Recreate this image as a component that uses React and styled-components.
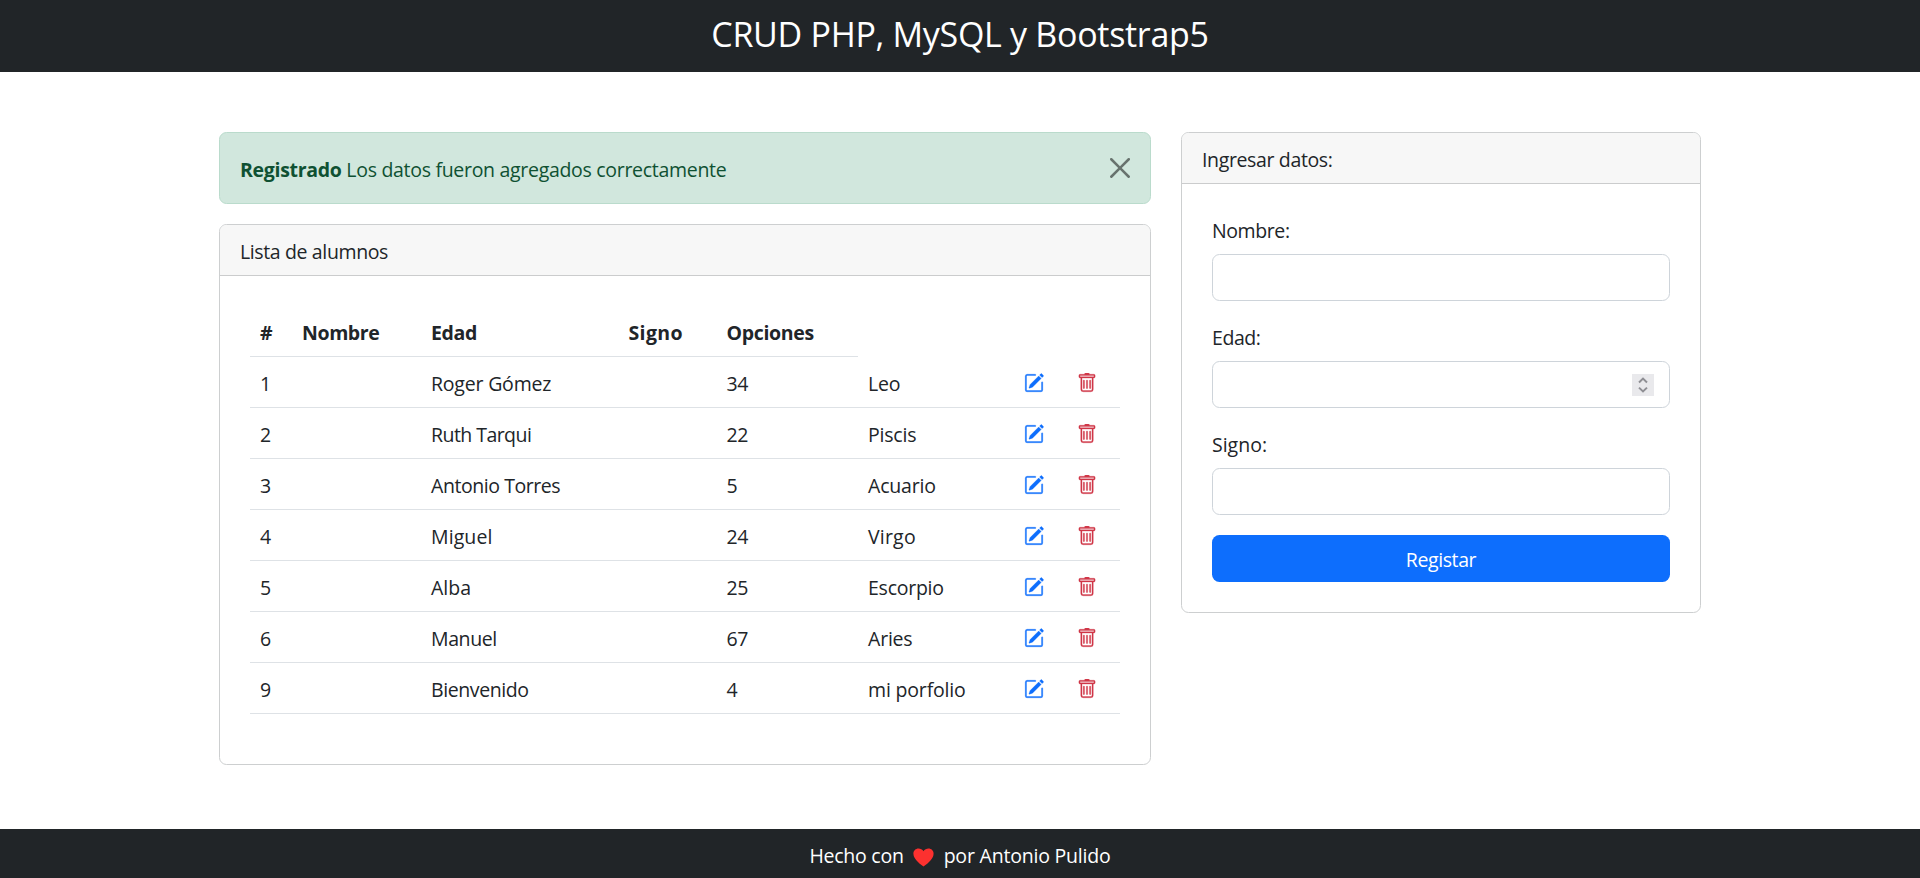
import React from "react";
import styled, { createGlobalStyle } from "styled-components";
import { BsPencilSquare, BsTrash } from "react-icons/bs";

const GlobalStyle = createGlobalStyle`
  *, *::before, *::after { box-sizing: border-box; }
  body {
    margin: 0;
    background: #fff;
    color: #212529;
    font: 400 19.5px/30px "Open Sans", "Noto Sans", sans-serif;
    overflow: hidden;
  }
`;

const Page = styled.div`
  display: flex;
  flex-direction: column;
  height: 878px;
`;

const Header = styled.header`
  flex: none;
  height: 72px;
  padding: 13px 0 17px;
  background: #212528;
  color: #fff;
  text-align: center;
`;

const Title = styled.h3`
  margin: 0;
  font-size: 34px;
  font-weight: 400;
  line-height: 42px;
  letter-spacing: -0.3px;
`;

const Main = styled.main`
  flex: 1;
  display: grid;
  grid-template-columns: 932px 520px;
  justify-content: center;
  align-items: start;
  column-gap: 30px;
  padding-top: 60px;
`;

const Column = styled.div`
  display: flex;
  flex-direction: column;
  gap: 20px;
`;

const Text = styled.span`
  letter-spacing: ${(p) => p.$ls ?? -0.3}px;
  white-space: nowrap;
`;

const Alert = styled.div`
  display: flex;
  justify-content: space-between;
  height: 72px;
  padding: 22px 20px 18px;
  border: 1px solid #badbcc;
  border-radius: 7.5px;
  background: #d1e7dd;
  color: #0f5132;
`;

const Close = styled.button`
  width: 20px;
  height: 20px;
  margin: 3px 0 0;
  padding: 0;
  border: 0;
  background: none;
  color: #000;
  opacity: 0.5;

  svg { display: block; }
`;

const Card = styled.section`
  border: 1px solid #cdcfd0;
  border-radius: 7.5px;
  overflow: hidden;
`;

const CardHeader = styled.div`
  height: 51px;
  padding: 12px 20px 8px;
  border-bottom: 1px solid #cbcccd;
  background: #f7f7f7;
`;

const CardBody = styled.div`
  padding: 30px;
`;

const Table = styled.table`
  width: 870px;
  margin-bottom: 20px;
  table-layout: fixed;
  border-collapse: separate;
  border-spacing: 0;
  text-align: left;
`;

const Col = styled.col`
  width: ${(p) => p.$w}px;
`;

const Cell = styled.td`
  height: 51px;
  padding: 12px 10px 8px;
  border-bottom: 1px solid #dee2e6;
  font-weight: 400;
  line-height: 30px;
`;

const HeadCell = styled(Cell)`
  font-weight: 700;
`;

const IconLink = styled.a`
  display: flex;
  align-items: center;
  height: 30px;
  margin-top: -1px;
  padding-bottom: 1px;
  color: ${(p) => p.$color};

  svg { stroke-width: 0.25; }
`;

const Form = styled.form`
  display: flex;
  flex-direction: column;
  gap: 20px;
  padding: 30px;
`;

const Field = styled.label`
  display: flex;
  flex-direction: column;
  gap: 8px;
  padding-top: 2px;
`;

const InputBox = styled.span`
  display: flex;
  align-items: center;
  justify-content: flex-end;
  height: 47px;
  padding: 0 15px;
  border: 1px solid #ced4da;
  border-radius: 7.5px;
`;

const Spinner = styled.span`
  display: flex;
  align-items: center;
  justify-content: center;
  width: 22px;
  height: 22px;
  background: #e9e9ec;
  color: #8f8f94;
`;

const Submit = styled.button`
  height: 47px;
  padding: 2px 0 0;
  border: 0;
  border-radius: 7.5px;
  background: #0d6efd;
  color: #fff;
  font: inherit;
`;

const Footer = styled.footer`
  flex: none;
  display: flex;
  justify-content: center;
  gap: 9.5px;
  height: 49px;
  padding-top: 12px;
  background: #212528;
  color: #fff;

  svg { margin-top: 7px; }
`;

const columns = [42, 129, 197.5, 98, 141.5, 156, 53, 53];

const headings = [
  ["#", 0],
  ["Nombre", -0.4],
  ["Edad", -0.33],
  ["Signo", 0.35],
  ["Opciones", -0.33],
];

const students = [
  [1, "Roger Gómez", -0.2, 34, "Leo", -0.2],
  [2, "Ruth Tarqui", -0.55, 22, "Piscis", -0.2],
  [3, "Antonio Torres", -0.44, 5, "Acuario", -0.2],
  [4, "Miguel", 0.1, 24, "Virgo", 0.2],
  [5, "Alba", 0, 25, "Escorpio", -0.25],
  [6, "Manuel", -0.4, 67, "Aries", -0.2],
  [9, "Bienvenido", -0.4, 4, "mi porfolio", -0.17],
];

function Student({ data: [id, name, nameLs, age, sign, signLs] }) {
  return (
    <tr>
      <Cell>{id}</Cell>
      <Cell />
      <Cell><Text $ls={nameLs}>{name}</Text></Cell>
      <Cell />
      <Cell><Text>{age}</Text></Cell>
      <Cell><Text $ls={signLs}>{sign}</Text></Cell>
      <Cell><IconLink $color="#0d6efd"><BsPencilSquare size={20} /></IconLink></Cell>
      <Cell><IconLink $color="#d03748"><BsTrash size={20} /></IconLink></Cell>
    </tr>
  );
}

export default function App() {
  return (
    <Page>
      <GlobalStyle />
      <Header><Title>CRUD PHP, MySQL y Bootstrap5</Title></Header>
      <Main>
        <Column>
          <Alert>
            <Text $ls={-0.3}>
              <strong>Registrado</strong> Los datos fueron agregados correctamente
            </Text>
            <Close aria-label="Close">
              <svg width="20" height="20" viewBox="0 0 16 16" fill="currentColor">
                <path d="M.293.293a1 1 0 0 1 1.414 0L8 6.586 14.293.293a1 1 0 1 1 1.414 1.414L9.414 8l6.293 6.293a1 1 0 0 1-1.414 1.414L8 9.414l-6.293 6.293a1 1 0 0 1-1.414-1.414L6.586 8 .293 1.707a1 1 0 0 1 0-1.414z" />
              </svg>
            </Close>
          </Alert>
          <Card>
            <CardHeader><Text $ls={-0.37}>Lista de alumnos</Text></CardHeader>
            <CardBody>
              <Table>
                <colgroup>{columns.map((w, i) => <Col key={i} $w={w} />)}</colgroup>
                <thead>
                  <tr>
                    {headings.map(([label, ls]) => (
                      <HeadCell as="th" key={label}><Text $ls={ls}>{label}</Text></HeadCell>
                    ))}
                  </tr>
                </thead>
                <tbody>
                  {students.map((s) => <Student key={s[0]} data={s} />)}
                </tbody>
              </Table>
            </CardBody>
          </Card>
        </Column>
        <Card>
          <CardHeader><Text $ls={-0.36}>Ingresar datos:</Text></CardHeader>
          <Form>
            <Field><Text $ls={-0.4}>Nombre:</Text><InputBox /></Field>
            <Field>
              <Text $ls={-0.42}>Edad:</Text>
              <InputBox>
                <Spinner>
                  <svg width="10" height="16" viewBox="0 0 10 16" fill="none" stroke="currentColor" strokeWidth="2">
                    <path d="M1 5.4 5 1.6 9 5.400M1 10.600 5 14.400 9 10.600" />
                  </svg>
                </Spinner>
              </InputBox>
            </Field>
            <Field><Text $ls={0}>Signo:</Text><InputBox /></Field>
            <Submit type="button"><Text $ls={-0.41}>Registar</Text></Submit>
          </Form>
        </Card>
      </Main>
      <Footer>
        <Text $ls={-0.25}>Hecho con</Text>
        <svg width="21" height="19" viewBox="0 0 21 19">
          <path fill="#fc312f" d="M10.5 18.6C8.6 16.9.4 11.6.4 5.7.4 2.7 2.7.5 5.5.5c2 0 3.9 1 5 2.8C11.600 1.500 13.500.5 15.500.5c2.800 0 5.100 2.200 5.100 5.200 0 5.900-8.200 11.200-10.100 12.900z" />
        </svg>
        <Text $ls={-0.2}>por Antonio Pulido</Text>
      </Footer>
    </Page>
  );
}
